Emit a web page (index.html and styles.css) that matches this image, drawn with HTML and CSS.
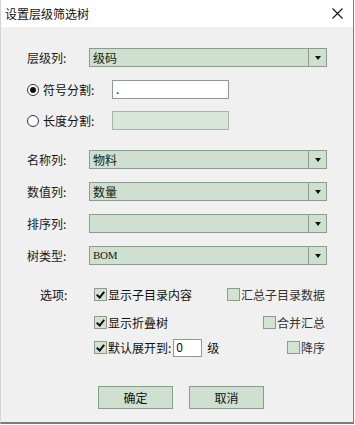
FILE: index.html
```html
<!DOCTYPE html>
<html lang="zh-CN">
<head>
  <meta charset="UTF-8" />
  <title>设置层级筛选树</title>
  <link rel="stylesheet" href="styles.css">
</head>
<body>
  <div class="window">
    <div class="titlebar">
      <span class="title">设置层级筛选树</span>
      <svg class="close" width="11" height="11" viewBox="0 0 11 11">
        <path d="M0.5 0.5L10.5 10.5M10.5 0.5L0.5 10.5" stroke="#111" stroke-width="1.1" fill="none"/>
      </svg>
    </div>

    <div class="content">
      <div class="field">
        <label class="label">层级列:</label>
        <div class="combo"><span class="value">级码</span><span class="drop"><i class="arrow"></i></span></div>
      </div>

      <div class="radio-row first">
        <span class="radio checked"></span>
        <span class="radio-text">符号分割:</span>
        <div class="textbox">.</div>
      </div>
      <div class="radio-row">
        <span class="radio"></span>
        <span class="radio-text">长度分割:</span>
        <div class="textbox disabled"></div>
      </div>

      <div class="field gap-big">
        <label class="label">名称列:</label>
        <div class="combo"><span class="value">物料</span><span class="drop"><i class="arrow"></i></span></div>
      </div>
      <div class="field">
        <label class="label">数值列:</label>
        <div class="combo"><span class="value">数量</span><span class="drop"><i class="arrow"></i></span></div>
      </div>
      <div class="field">
        <label class="label">排序列:</label>
        <div class="combo"><span class="value"></span><span class="drop"><i class="arrow"></i></span></div>
      </div>
      <div class="field">
        <label class="label">树类型:</label>
        <div class="combo"><span class="value bom">BOM</span><span class="drop"><i class="arrow"></i></span></div>
      </div>

      <div class="options">
        <div class="opt-row r1">
          <span class="opt-label">选项:</span>
          <span class="check checked"></span><span class="opt-text">显示子目录内容</span>
          <span class="right"><span class="check"></span><span class="opt-text">汇总子目录数据</span></span>
        </div>
        <div class="opt-row r2">
          <span class="opt-label"></span>
          <span class="check checked"></span><span class="opt-text">显示折叠树</span>
          <span class="right"><span class="check"></span><span class="opt-text">合并汇总</span></span>
        </div>
        <div class="opt-row r3">
          <span class="opt-label"></span>
          <span class="check checked"></span><span class="opt-text">默认展开到:</span>
          <div class="level-box">0</div>
          <span class="level-text">级</span>
          <span class="right"><span class="check"></span><span class="opt-text">降序</span></span>
        </div>
      </div>

      <div class="buttons">
        <button class="btn">确定</button>
        <button class="btn">取消</button>
      </div>
    </div>
  </div>
</body>
</html>
```

FILE: styles.css
```css
* {
  box-sizing: border-box;
}

body {
  margin: 0;
  padding: 0;
  width: 355px;
  height: 425px;
  background: #ffffff;
  font-family: "Noto Sans CJK SC", "Noto Sans", sans-serif;
  font-size: 12px;
  color: #111;
  overflow: hidden;
}

.window {
  width: 354px;
  height: 424px;
  background: #f0f0f0;
  border-left: 1px solid #d4d4d4;
  border-right: 1px solid #7c7c7c;
  border-bottom: 2px solid #7c7c7c;
}

.titlebar {
  height: 27px;
  background: #fff;
  display: flex;
  align-items: center;
  padding: 0 10px 0 4px;
}

.title {
  flex: 1;
  font-size: 12px;
  line-height: 27px;
  padding-bottom: 1px;
}

.close {
  display: block;
  margin-top: -1px;
}

.content {
  padding: 21px 0 0 26px;
}

/* combo rows */
.field {
  display: flex;
  align-items: center;
  height: 19px;
  margin-top: 13px;
}

.field:first-child {
  margin-top: 0;
}

.field.gap-big {
  margin-top: 20px;
}

.label {
  width: 62px;
  color: #1a1a1a;
}

.combo {
  display: flex;
  width: 238px;
  height: 19px;
  background: #cfdfd0;
  border: 1px solid #8a9c8a;
}

.value {
  flex: 1;
  padding-left: 3px;
  line-height: 17px;
  color: #142414;
}

.value.bom {
  font-family: "Liberation Serif", serif;
  font-size: 11px;
  letter-spacing: -0.3px;
}

.drop {
  width: 18px;
  border-left: 1px solid #8a9c8a;
  display: flex;
  justify-content: center;
  align-items: center;
}

.arrow {
  display: block;
  width: 0;
  height: 0;
  border-left: 3px solid transparent;
  border-right: 3px solid transparent;
  border-top: 4px solid #111;
  margin-top: 1px;
}

/* radio rows */
.radio-row {
  display: flex;
  align-items: center;
  height: 19px;
  margin-top: 13px;
}

.radio-row + .radio-row {
  margin-top: 12px;
}

.radio {
  flex: none;
  width: 12px;
  height: 12px;
  border: 1px solid #333;
  border-radius: 50%;
  background: #fff;
  position: relative;
}

.radio.checked::after {
  content: '';
  position: absolute;
  left: 2px;
  top: 2px;
  width: 6px;
  height: 6px;
  border-radius: 50%;
  background: #111;
}

.radio-text {
  flex: none;
  width: 73px;
  padding-left: 4px;
}

.textbox {
  flex: none;
  width: 117px;
  height: 19px;
  background: #fff;
  border: 1px solid #8a9c8a;
  padding-left: 3px;
  line-height: 15px;
}

.textbox.disabled {
  background: #d9e5da;
  border-color: #a6b6a6;
}

/* options */
.options {
  margin-top: 20px;
  width: 298px;
}

.opt-row {
  display: flex;
  align-items: center;
  height: 19px;
}

.opt-row.r2 {
  margin-top: 9px;
}

.opt-row.r3 {
  margin-top: 6px;
}

.opt-label {
  width: 67px;
  padding-left: 13px;
}

.check {
  flex: none;
  width: 13px;
  height: 13px;
  background: #d4e2d4;
  border: 1px solid #8a9c8a;
  position: relative;
}

.check.checked::after {
  content: '';
  position: absolute;
  left: 3px;
  top: 1px;
  width: 3px;
  height: 6px;
  border-right: 2px solid #111;
  border-bottom: 2px solid #111;
  transform: rotate(40deg);
}

.opt-text {
  padding-left: 1px;
}

.right {
  margin-left: auto;
  display: flex;
  align-items: center;
  color: #333;
}

.level-box {
  width: 29px;
  height: 18px;
  background: #fff;
  border: 1px solid #8a9c8a;
  margin-left: 2px;
  padding-left: 2px;
  line-height: 14px;
}

.level-text {
  padding-left: 5px;
}

/* buttons */
.buttons {
  display: flex;
  margin-top: 29px;
  padding-left: 71px;
  gap: 16px;
}

.btn {
  width: 75px;
  height: 23px;
  background: #cfdfd0;
  border: 1px solid #8a9c8a;
  font-family: "Noto Sans CJK SC", sans-serif;
  font-size: 12px;
  color: #111;
  padding: 0;
}
```
